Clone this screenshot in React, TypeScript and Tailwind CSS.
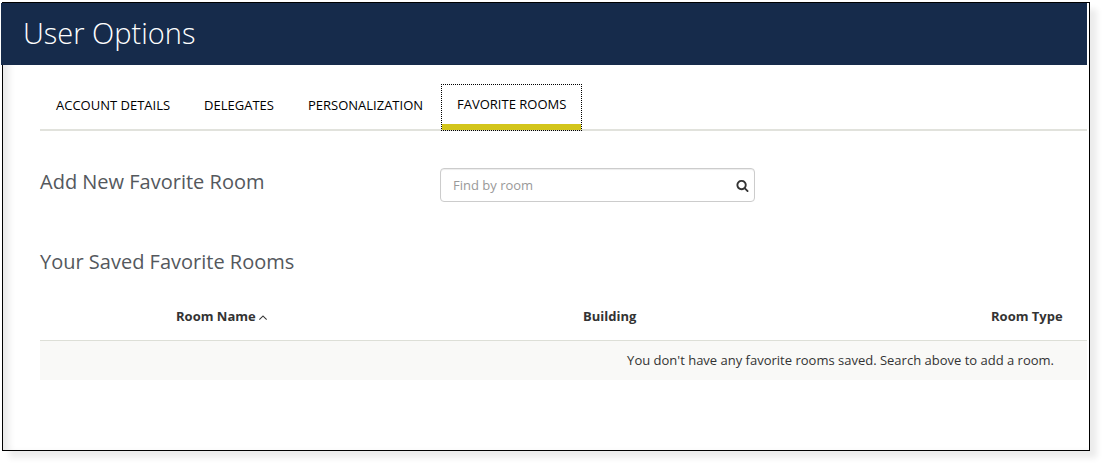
import { useState } from "react";

const tabs = ["Account Details", "Delegates", "Personalization", "Favorite Rooms"];

function SearchIcon() {
  return (
    <svg viewBox="0 0 1792 1792" className="size-[13px]" fill="#333" aria-hidden="true">
      <path d="M1216 832q0-185-131.500-316.500t-316.500-131.500-316.500 131.500-131.500 316.500 131.500 316.500 316.500 131.500 316.500-131.500 131.500-316.500zm512 832q0 52-38 90t-90 38q-54 0-90-38l-343-342q-179 124-399 124-143 0-273.500-55.500t-225-150-150-225-55.500-273.500 55.500-273.500 150-225 225-150 273.500-55.500 273.500 55.500 225 150 150 225 55.500 273.500q0 220-124 399l343 343q37 37 37 90z" />
    </svg>
  );
}

function SortUpIcon() {
  return (
    <svg viewBox="0 0 1792 1792" className="size-[14px]" fill="#333" aria-hidden="true">
      <path d="M1395 1184q0 13-10 23l-50 50q-10 10-23 10t-23-10l-393-393-393 393q-10 10-23 10t-23-10l-50-50q-10-10-10-23t10-23l466-466q10-10 23-10t23 10l466 466q10 10 10 23z" />
    </svg>
  );
}

function Tab({ label, active, onSelect }: { label: string; active: boolean; onSelect: () => void }) {
  return (
    <button
      type="button"
      role="tab"
      aria-selected={active}
      onClick={onSelect}
      className={
        active
          ? "flex h-full flex-col border border-dotted border-black text-black uppercase"
          : "flex h-full items-center px-4 pb-1 text-black uppercase"
      }
    >
      {active ? (
        <>
          <span className="flex flex-1 items-center px-[15px]">{label}</span>
          <span className="h-[6px] w-full shrink-0 bg-[#d3c51b]" />
        </>
      ) : (
        label
      )}
    </button>
  );
}

export default function App() {
  const [active, setActive] = useState("Favorite Rooms");
  const [query, setQuery] = useState("");

  return (
    <div className="bg-white pt-[2px] pr-[14px] pb-[14px] pl-px font-['Open_Sans',sans-serif] text-[13px] text-[#333]">
      <div className="ml-px border border-black bg-white pr-[2px] shadow-[7px_7px_6px_0px_#ececec,inset_9px_0px_7px_-3px_#e9e9e9]">
        <header className="-ml-[2px] flex h-[62px] items-center bg-[#162b4b] pb-[2px] pl-[22px]">
          <h1 className="text-[29px] leading-[60px] font-light text-white">User Options</h1>
        </header>
        <main className="pt-[19px] pb-[70px] pl-[37px]">
          <div role="tablist" className="flex h-[47px] gap-[2px] bg-[linear-gradient(#e1e2dc,#e1e2dc)] bg-[length:100%_2px] bg-bottom bg-no-repeat">
            {tabs.map((label) => (
              <Tab key={label} label={label} active={label === active} onSelect={() => setActive(label)} />
            ))}
          </div>

          <section className="mt-[37px] flex items-start">
            <label htmlFor="room-search" className="w-[400px] text-[20px] leading-7 text-[#54585d]">
              Add New Favorite Room
            </label>
            <div className="flex h-[34px] w-[315px] items-center rounded border border-[#ccc] bg-white pr-[5px] pl-3 shadow-[inset_0_1px_1px_rgba(0,0,0,0.075)]">
              <input
                id="room-search"
                type="text"
                value={query}
                onChange={(e) => setQuery(e.target.value)}
                placeholder="Find by room"
                className="h-full min-w-0 flex-1 bg-transparent outline-none placeholder:text-[#999]"
              />
              <button type="button" aria-label="Search">
                <SearchIcon />
              </button>
            </div>
          </section>

          <h2 className="mt-[46px] text-[20px] leading-7 text-[#54585d]">Your Saved Favorite Rooms</h2>

          <table className="mt-4 w-full table-fixed border-collapse">
            <thead>
              <tr className="h-12 border-b border-[#dddfd7] text-left whitespace-nowrap">
                <td className="w-[128px]" />
                <th scope="col" aria-sort="ascending" className="w-[407px] px-2 pt-[2px] font-bold">
                  <span className="flex items-center">
                    Room Name
                    <SortUpIcon />
                  </span>
                </th>
                <th scope="col" className="w-[408px] px-2 pt-[2px] font-bold">Building</th>
                <th scope="col" className="px-2 pt-[2px] font-bold">Room Type</th>
              </tr>
            </thead>
            <tbody>
              <tr className="h-10 bg-[#f9f9f7]">
                <td colSpan={4} className="pr-[33px] text-right">
                  You don't have any favorite rooms saved. Search above to add a room.
                </td>
              </tr>
            </tbody>
          </table>
        </main>
      </div>
    </div>
  );
}
